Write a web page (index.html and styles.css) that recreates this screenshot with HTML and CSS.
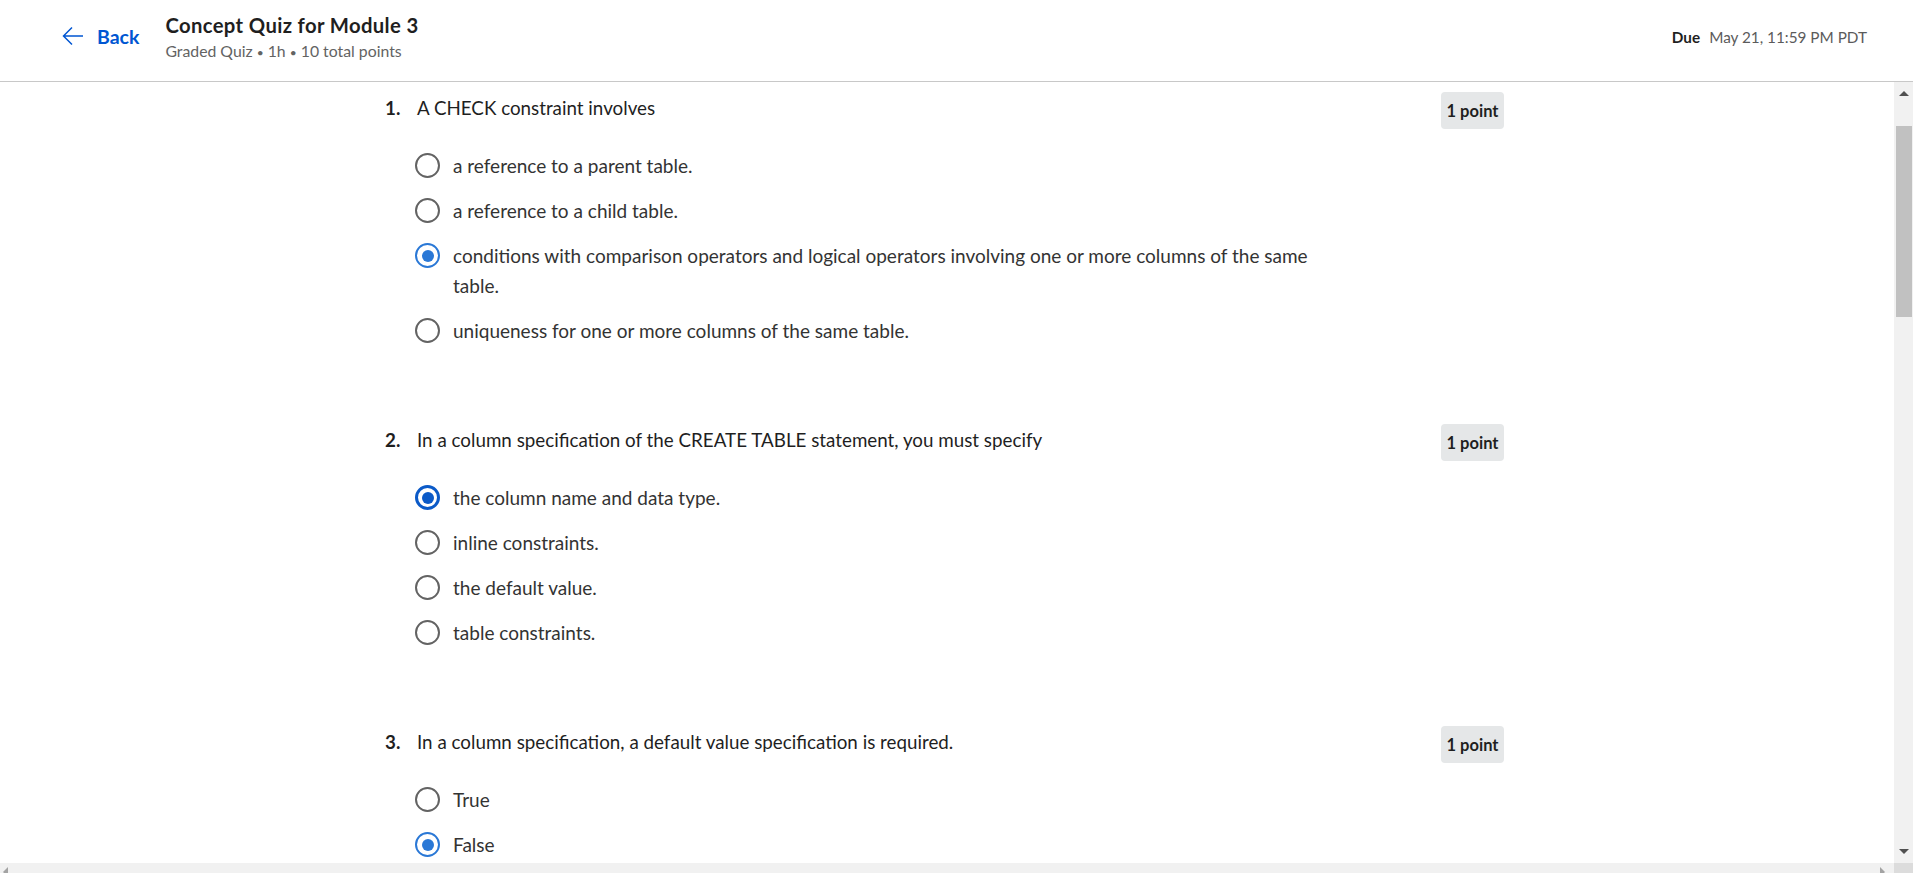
FILE: index.html
```html
<!DOCTYPE html>
<html lang="en">
<head>
<meta charset="utf-8">
<title>Concept Quiz for Module 3</title>
<link rel="stylesheet" href="styles.css">
</head>
<body>
<header class="topbar">
  <a class="back" href="#">
    <svg class="back-icon" width="22" height="20" viewBox="0 0 22 20" aria-hidden="true">
      <path d="M21 10H1.5M10 1.5L1.5 10L10 18.5" fill="none" stroke="currentColor" stroke-width="1.5"/>
    </svg>
    <span>Back</span>
  </a>
  <div class="title-block">
    <div class="title">Concept Quiz for Module 3</div>
    <div class="subtitle">Graded Quiz <span class="dot">•</span> 1h <span class="dot">•</span> 10 total points</div>
  </div>
  <div class="due"><strong>Due</strong><span>May 21, 11:59 PM PDT</span></div>
</header>

<div class="main">
  <div class="content">
    <div class="quiz">
      <section class="question">
        <div class="q-head">
          <div class="q-title"><span class="q-num">1.</span><span>A CHECK constraint involves</span></div>
          <span class="badge">1 point</span>
        </div>
        <div class="options">
          <div class="option"><span class="radio"></span><span class="opt-text">a reference to a parent table.</span></div>
          <div class="option"><span class="radio"></span><span class="opt-text">a reference to a child table.</span></div>
          <div class="option"><span class="radio checked"></span><span class="opt-text">conditions with comparison operators and logical operators involving one or more columns of the same table.</span></div>
          <div class="option"><span class="radio"></span><span class="opt-text">uniqueness for one or more columns of the same table.</span></div>
        </div>
      </section>

      <section class="question">
        <div class="q-head">
          <div class="q-title"><span class="q-num">2.</span><span>In a column specification of the CREATE TABLE statement, you must specify</span></div>
          <span class="badge">1 point</span>
        </div>
        <div class="options">
          <div class="option"><span class="radio checked focus"></span><span class="opt-text">the column name and data type.</span></div>
          <div class="option"><span class="radio"></span><span class="opt-text">inline constraints.</span></div>
          <div class="option"><span class="radio"></span><span class="opt-text">the default value.</span></div>
          <div class="option"><span class="radio"></span><span class="opt-text">table constraints.</span></div>
        </div>
      </section>

      <section class="question">
        <div class="q-head">
          <div class="q-title"><span class="q-num">3.</span><span>In a column specification, a default value specification is required.</span></div>
          <span class="badge">1 point</span>
        </div>
        <div class="options">
          <div class="option"><span class="radio"></span><span class="opt-text">True</span></div>
          <div class="option"><span class="radio checked"></span><span class="opt-text">False</span></div>
        </div>
      </section>
    </div>
  </div>
  <div class="vbar">
    <span class="arrow-up"></span>
    <span class="vthumb"></span>
    <span class="vspace"></span>
    <span class="arrow-down"></span>
  </div>
</div>

<div class="hbar">
  <span class="arrow-left"></span>
  <span class="hspace"></span>
  <span class="arrow-right"></span>
  <span class="corner"></span>
</div>
</body>
</html>
```

FILE: styles.css
```css
html, body {
  margin: 0;
  padding: 0;
  height: 873px;
  overflow: hidden;
  background: #ffffff;
}

body {
  font-family: "Lato", "Liberation Sans", sans-serif;
  color: #1f1f1f;
  display: flex;
  flex-direction: column;
}

/* ---------- header ---------- */
.topbar {
  height: 81px;
  flex: 0 0 81px;
  border-bottom: 1px solid #c8c8c8;
  display: flex;
  align-items: center;
  padding: 0 46px 0 62px;
}

.back {
  display: flex;
  align-items: center;
  gap: 13px;
  color: #0056d2;
  text-decoration: none;
  font-weight: 700;
  font-size: 19.5px;
  margin-bottom: 9px;
}

.back-icon {
  display: block;
}

.title-block {
  margin-left: 26px;
  display: flex;
  flex-direction: column;
  margin-bottom: 5px;
}

.title {
  font-size: 20.3px;
  font-weight: 700;
  letter-spacing: 0.35px;
  line-height: 26px;
  color: #1f1f1f;
}

.subtitle {
  font-size: 15.8px;
  line-height: 25px;
  color: #636363;
}

.subtitle .dot {
  font-size: 12px;
}

.due {
  margin-left: auto;
  display: flex;
  align-items: baseline;
  gap: 9px;
  font-size: 15.3px;
  color: #5b5b5b;
  margin-bottom: 7px;
}

.due strong {
  color: #1f1f1f;
  font-weight: 700;
}

/* ---------- main scroll area ---------- */
.main {
  height: 781px;
  flex: 0 0 781px;
  display: flex;
}

.content {
  flex: 1;
  overflow: hidden;
}

.quiz {
  width: 1124px;
  margin: 0 auto;
  padding-top: 10px;
  display: flex;
  flex-direction: column;
  gap: 78px;
}

.question {
  padding-right: 5px;
}

.q-head {
  display: flex;
  align-items: flex-start;
  justify-content: space-between;
  height: 37px;
}

.q-title {
  display: flex;
  padding-top: 1px;
  font-size: 18.8px;
  line-height: 30px;
  color: #1f1f1f;
}

.q-num {
  width: 32px;
  font-weight: 700;
}

.badge {
  height: 37px;
  width: 63px;
  box-sizing: border-box;
  display: flex;
  align-items: center;
  justify-content: center;
  background: #e5e7e8;
  border-radius: 4px;
  font-size: 16.5px;
  font-weight: 700;
  color: #1f1f1f;
}

.options {
  margin: 22px 0 0 30px;
  display: flex;
  flex-direction: column;
  gap: 15px;
  width: 920px;
}

.option {
  display: flex;
  align-items: flex-start;
  gap: 13px;
  font-size: 19px;
  line-height: 30px;
  color: #333333;
}

.radio {
  flex: 0 0 auto;
  width: 25px;
  height: 25px;
  margin-top: 2px;
  box-sizing: border-box;
  border: 2px solid #636363;
  border-radius: 50%;
  display: flex;
  align-items: center;
  justify-content: center;
}

.radio.checked {
  border-color: #2a78d6;
}

.radio.checked::after {
  content: "";
  width: 12px;
  height: 12px;
  border-radius: 50%;
  background: #2a78d6;
}

.radio.focus {
  border: 3px solid #0b5ac8;
}

.radio.focus::after {
  background: #0b5ac8;
}

.opt-text {
  flex: 1;
}

/* ---------- fake scrollbars ---------- */
.vbar {
  width: 19px;
  flex: 0 0 19px;
  background: #f1f1f1;
  display: flex;
  flex-direction: column;
  align-items: center;
}

.arrow-up {
  width: 0;
  height: 0;
  margin-top: 9px;
  border-left: 5px solid transparent;
  border-right: 5px solid transparent;
  border-bottom: 5px solid #505050;
}

.vthumb {
  margin-top: 30px;
  width: 16px;
  height: 191px;
  margin-left: 1px;
  background: #c1c1c1;
}

.vspace {
  flex: 1;
}

.arrow-down {
  width: 0;
  height: 0;
  margin-bottom: 9px;
  border-left: 5px solid transparent;
  border-right: 5px solid transparent;
  border-top: 5px solid #505050;
}

.hbar {
  height: 17px;
  flex: 0 0 17px;
  background: #f1f1f1;
  display: flex;
  align-items: center;
}

.arrow-left {
  width: 0;
  height: 0;
  margin-left: 3px;
  border-top: 5px solid transparent;
  border-bottom: 5px solid transparent;
  border-right: 5px solid #a3a3a3;
}

.hspace {
  flex: 1;
}

.arrow-right {
  width: 0;
  height: 0;
  margin-right: 9px;
  border-top: 5px solid transparent;
  border-bottom: 5px solid transparent;
  border-left: 5px solid #a3a3a3;
}

.corner {
  width: 19px;
  height: 17px;
  background: #dcdcdc;
}
```
